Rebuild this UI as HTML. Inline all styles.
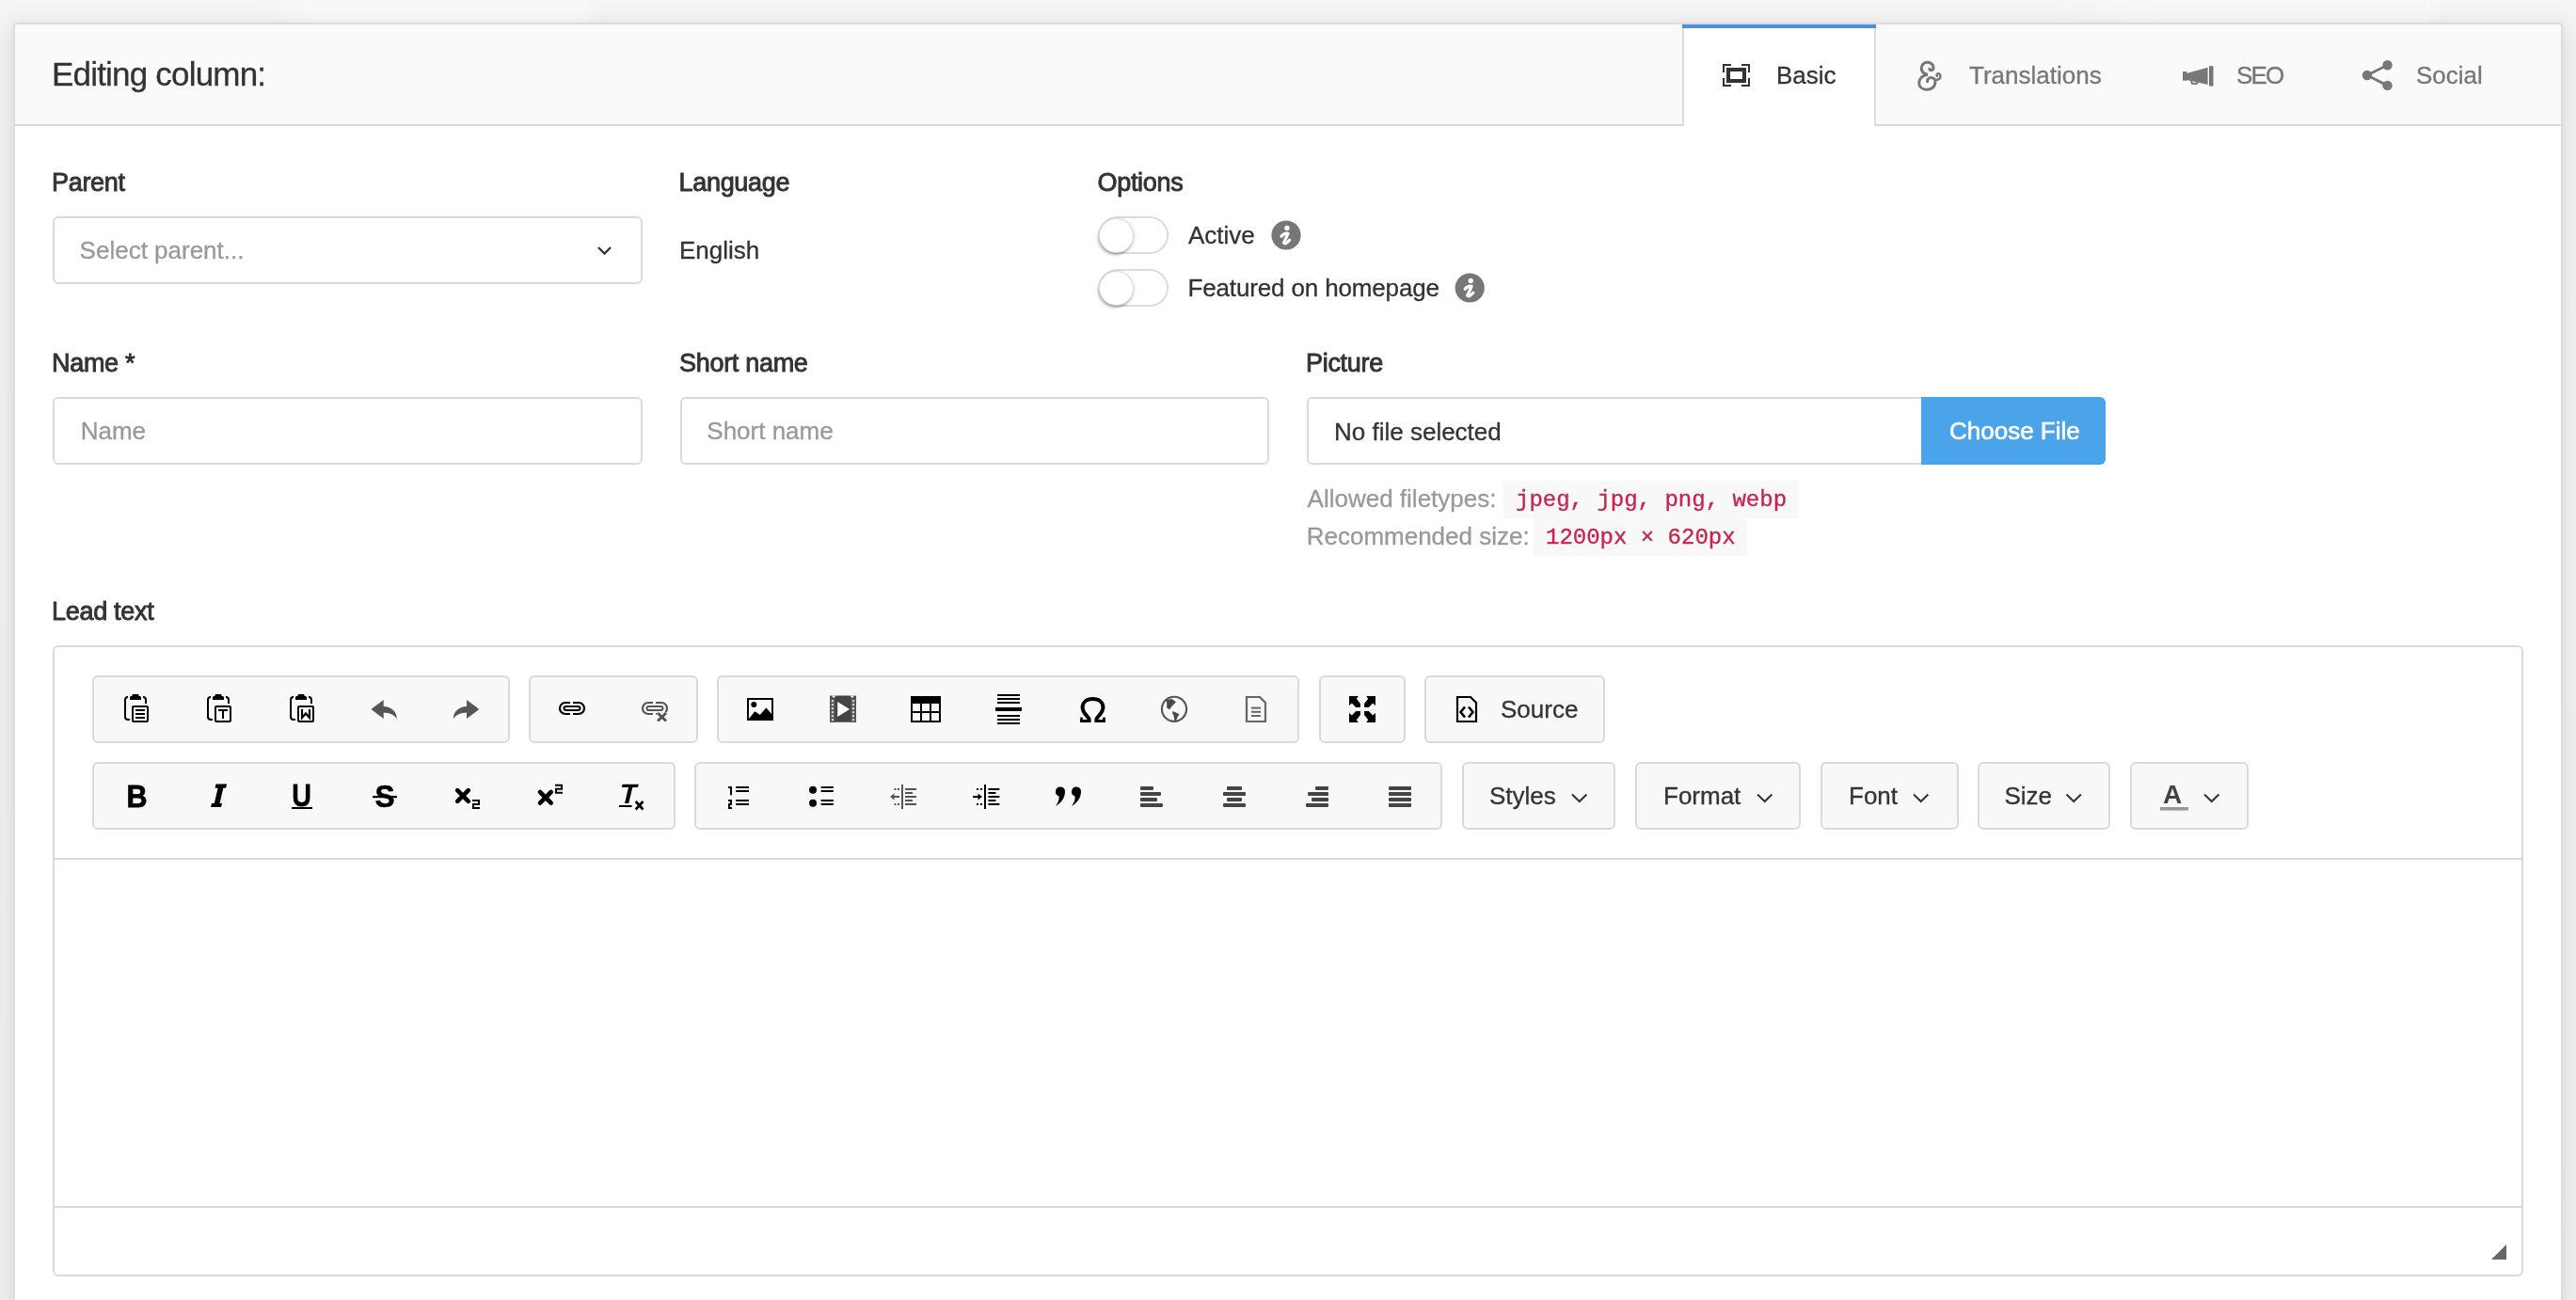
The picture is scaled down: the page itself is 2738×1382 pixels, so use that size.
<!DOCTYPE html>
<html><head><meta charset="utf-8">
<style>
html,body{margin:0;padding:0;width:2738px;height:1382px;overflow:hidden;background:linear-gradient(180deg,#f5f5f5 0px,#eeeeee 50px,#ececec 1382px);font-family:"Liberation Sans",sans-serif;}
.abs{position:absolute;}
.t{position:absolute;white-space:pre;line-height:1;font-size:26px;color:#333;-webkit-text-stroke-width:0.3px;}
.lbl{font-weight:400;letter-spacing:-0.3px;color:#333;-webkit-text-stroke:0.9px #333;font-size:27px !important;}
.ph{color:#999;}
.box{position:absolute;box-sizing:border-box;border:2px solid #dadada;border-radius:6px;background:#fff;}
.grp{position:absolute;box-sizing:border-box;border:2px solid #dadada;border-radius:6px;background:#f8f8f8;}
.mono{font-family:"Liberation Mono",monospace;font-size:24px;color:#c7254e;-webkit-text-stroke:0.35px #c7254e;}
.code{position:absolute;background:#f8f8f8;}
</style></head>
<body><div style="position:absolute;left:0;top:0;width:2738px;height:1382px;will-change:transform;">
<!-- background -->
<div class="abs" style="left:0;top:0;width:2738px;height:24px;background:linear-gradient(90deg,rgba(255,255,255,0) 270px,rgba(255,255,255,0.35) 330px,rgba(255,255,255,0.35) 620px,rgba(255,255,255,0) 640px,rgba(255,255,255,0) 2150px,rgba(255,255,255,0.3) 2300px,rgba(255,255,255,0.3) 2580px,rgba(255,255,255,0) 2600px);"></div>
<!-- card -->
<div class="abs" style="left:14px;top:24px;width:2710px;height:1500px;box-sizing:border-box;border:2px solid #dcdcdc;border-radius:4px;background:#fff;box-shadow:0 1px 14px rgba(0,0,0,0.09);"></div>
<!-- header -->
<div class="abs" style="left:16px;top:26px;width:2706px;height:106px;background:#fafafa;border-radius:2px 2px 0 0;"></div>
<div class="abs" style="left:16px;top:132px;width:2706px;height:2px;background:#d9d9d9;"></div>
<!-- active tab -->
<div class="abs" style="left:1788px;top:26px;width:206px;height:108px;box-sizing:border-box;background:#fff;border-left:2px solid #dcdcdc;border-right:2px solid #dcdcdc;"></div>
<div class="abs" style="left:1788px;top:26px;width:206px;height:4px;background:#4a8fe0;"></div>

<div class="t" style="left:55px;top:61.4px;font-size:35px;letter-spacing:-0.8px;">Editing column:</div>
<div class="t" style="left:1888px;top:67px;">Basic</div>
<div class="t" style="left:2093px;top:67px;color:#777;">Translations</div>
<div class="t" style="left:2377px;top:67px;color:#777;letter-spacing:-1.9px;">SEO</div>
<div class="t" style="left:2568px;top:67px;color:#777;">Social</div>

<!-- row 1 -->
<div class="t lbl" style="left:55px;top:181.1px;">Parent</div>
<div class="box" style="left:56px;top:230px;width:627px;height:72px;"></div>
<div class="t ph" style="left:84.6px;top:253px;">Select parent...</div>

<div class="t lbl" style="left:721.5px;top:181.1px;">Language</div>
<div class="t" style="left:722px;top:253px;">English</div>

<div class="t lbl" style="left:1166.5px;top:181.1px;">Options</div>
<div class="abs" style="left:1168px;top:230px;width:74px;height:40px;box-sizing:border-box;border:2px solid #dcdcdc;border-radius:20px;background:#fff;"></div>
<div class="abs" style="left:1168px;top:232px;width:37px;height:37px;box-sizing:border-box;border:1px solid rgba(0,0,0,0.14);border-radius:50%;background:#fff;box-shadow:-1px 2px 3px rgba(0,0,0,0.3),2px 0 4px rgba(0,0,0,0.06);"></div>
<div class="t" style="left:1263px;top:236.6px;">Active</div>
<div class="abs" style="left:1168px;top:286px;width:74px;height:40px;box-sizing:border-box;border:2px solid #dcdcdc;border-radius:20px;background:#fff;"></div>
<div class="abs" style="left:1168px;top:288px;width:37px;height:37px;box-sizing:border-box;border:1px solid rgba(0,0,0,0.14);border-radius:50%;background:#fff;box-shadow:-1px 2px 3px rgba(0,0,0,0.3),2px 0 4px rgba(0,0,0,0.06);"></div>
<div class="t" style="left:1262.5px;top:292.6px;letter-spacing:-0.15px;">Featured on homepage</div>

<!-- row 2 -->
<div class="t lbl" style="left:55px;top:373.1px;">Name *</div>
<div class="box" style="left:56px;top:422px;width:627px;height:72px;"></div>
<div class="t ph" style="left:85.7px;top:445px;">Name</div>

<div class="t lbl" style="left:722px;top:373.1px;">Short name</div>
<div class="box" style="left:723px;top:422px;width:626px;height:72px;"></div>
<div class="t ph" style="left:751.3px;top:445px;">Short name</div>

<div class="t lbl" style="left:1388px;top:373.1px;">Picture</div>
<div class="box" style="left:1389px;top:422px;width:660px;height:72px;border-radius:6px 0 0 6px;"></div>
<div class="abs" style="left:2042px;top:422px;width:196px;height:72px;background:#4ba3ea;border-radius:0 6px 6px 0;"></div>
<div class="t" style="left:1418px;top:446px;">No file selected</div>
<div class="t" style="left:2072px;top:445px;color:#fff;-webkit-text-stroke-width:0.6px;">Choose File</div>

<div class="t ph" style="left:1389.6px;top:517px;">Allowed filetypes:</div>
<div class="code" style="left:1598px;top:511px;width:314px;height:40px;"></div>
<div class="t mono" style="left:1611px;top:519.5px;">jpeg, jpg, png, webp</div>
<div class="t ph" style="left:1388.7px;top:556.6px;">Recommended size:</div>
<div class="code" style="left:1630px;top:551px;width:227px;height:40px;"></div>
<div class="t mono" style="left:1643px;top:559.6px;">1200px × 620px</div>

<!-- lead text -->
<div class="t lbl" style="left:55px;top:637.1px;">Lead text</div>
<div class="box" style="left:56px;top:686px;width:2626px;height:671px;"></div>
<div class="abs" style="left:58px;top:912px;width:2622px;height:2px;background:#dadada;"></div>
<div class="abs" style="left:58px;top:1282px;width:2622px;height:2px;background:#dadada;"></div>

<!-- toolbar row 1 -->
<div class="grp" style="left:98px;top:718px;width:444px;height:72px;"></div>
<div class="grp" style="left:562px;top:718px;width:180px;height:72px;"></div>
<div class="grp" style="left:762px;top:718px;width:619px;height:72px;"></div>
<div class="grp" style="left:1402px;top:718px;width:92px;height:72px;"></div>
<div class="grp" style="left:1514px;top:718px;width:192px;height:72px;"></div>
<div class="t" style="left:1595px;top:740.7px;">Source</div>
<!-- toolbar row 2 -->
<div class="grp" style="left:98px;top:810px;width:620px;height:72px;"></div>
<div class="grp" style="left:738px;top:810px;width:795px;height:72px;"></div>
<div class="grp" style="left:1554px;top:810px;width:163px;height:72px;"></div>
<div class="grp" style="left:1738px;top:810px;width:176px;height:72px;"></div>
<div class="grp" style="left:1935px;top:810px;width:147px;height:72px;"></div>
<div class="grp" style="left:2102px;top:810px;width:141px;height:72px;"></div>
<div class="grp" style="left:2264px;top:810px;width:126px;height:72px;"></div>
<div class="t" style="left:1583px;top:833px;">Styles</div>
<div class="t" style="left:1768px;top:833px;">Format</div>
<div class="t" style="left:1965px;top:833px;">Font</div>
<div class="t" style="left:2130.4px;top:833px;">Size</div>

<!-- ICONS -->
<svg class="abs" style="left:0;top:0;" width="2738" height="1382" viewBox="0 0 2738 1382">
<!--ICONS_START-->
<g stroke="#333" stroke-width="2" fill="none" stroke-linecap="square"><path d="M1832,76V69H1839M1852,69H1859V76M1832,84V91H1839M1852,91H1859V84"/></g>
<rect x="1837" y="74" width="17" height="12" fill="none" stroke="#333" stroke-width="4"/>
<path d="M2050.8,73.2C2051.5,75.5 2055,75.2 2055,71.8C2055,68.5 2052,66.2 2048.8,66.2C2044.8,66.2 2042.2,69.2 2042.2,72.5C2042.2,76 2045,78.3 2048.8,79.2C2043,80 2039.8,84 2039.8,88.2C2039.8,92.5 2043.5,95.2 2048.5,95.2C2053.5,95.2 2057,91.5 2057,87.3C2057,84.5 2055,82.5 2052.5,82.5C2050,82.5 2048.5,84.5 2048.5,86.8" fill="none" stroke="#777" stroke-width="3" stroke-linecap="round"/>
<path d="M2056.5,84.5C2058.5,85.5 2062.5,84.5 2062.5,81.2C2062.5,79.2 2061,78.2 2060,78.2C2058.8,78.2 2058.2,79.5 2058.8,81" fill="none" stroke="#777" stroke-width="2.4" stroke-linecap="round"/>
<g fill="#777"><rect x="2320" y="76" width="4.5" height="9.7"/><polygon points="2324,78 2346.6,71.7 2346.6,90 2324,85"/><rect x="2348" y="70.2" width="4.5" height="21.4"/></g><path d="M2329.5,85V87.5Q2329.5,89 2331,89H2334Q2335.5,89 2335.5,87.5V86" fill="none" stroke="#777" stroke-width="2"/>
<g fill="#777"><circle cx="2537.6" cy="69.2" r="5.2"/><circle cx="2516" cy="80" r="5.2"/><circle cx="2537.6" cy="90.9" r="5.2"/></g><path d="M2516,80L2537.6,69.2M2516,80L2537.6,90.9" stroke="#777" stroke-width="2.8"/>
<polyline points="636,263 642.5,269.5 649,263" fill="none" stroke="#333" stroke-width="2.3"/>
<circle cx="1367" cy="250" r="15.6" fill="#777"/>
<circle cx="1368.0" cy="242.5" r="2.7" fill="#fff"/>
<path d="M1362.0,251.2Q1365.0,247.4 1369.0,248.2L1364.5,258.2Q1366.0,260.4 1370.6,255.2" fill="none" stroke="#fff" stroke-width="3.2" stroke-linecap="round" stroke-linejoin="round"/>
<circle cx="1562.2" cy="306" r="15.6" fill="#777"/>
<circle cx="1563.2" cy="298.5" r="2.7" fill="#fff"/>
<path d="M1557.2,307.2Q1560.2,303.4 1564.2,304.2L1559.7,314.2Q1561.2,316.4 1565.8,311.2" fill="none" stroke="#fff" stroke-width="3.2" stroke-linecap="round" stroke-linejoin="round"/>
<g transform="translate(0,0)"><path d="M136,741Q133,741 133,744V762Q133,765 136,765H138M152,741Q155,741 155,744V748" fill="none" stroke="#000" stroke-width="2"/><path d="M138,744V741.5Q138,740 139.5,740H140.5V739Q140.5,738 141.5,738H146.5Q147.5,738 147.5,739V740H148.5Q150,740 150,741.5V744Z" fill="#000"/><rect x="141" y="751" width="16" height="16" rx="1" fill="#fff" stroke="#000" stroke-width="2"/><rect x="144" y="754" width="10" height="2"/><rect x="144" y="758" width="10" height="2"/><rect x="144" y="762" width="10" height="2"/></g>
<g transform="translate(88,0)"><path d="M136,741Q133,741 133,744V762Q133,765 136,765H138M152,741Q155,741 155,744V748" fill="none" stroke="#000" stroke-width="2"/><path d="M138,744V741.5Q138,740 139.5,740H140.5V739Q140.5,738 141.5,738H146.5Q147.5,738 147.5,739V740H148.5Q150,740 150,741.5V744Z" fill="#000"/><rect x="141" y="751" width="16" height="16" rx="1" fill="#fff" stroke="#000" stroke-width="2"/><rect x="144" y="754" width="10" height="2"/><rect x="148" y="756" width="2" height="8"/></g>
<g transform="translate(176,0)"><path d="M136,741Q133,741 133,744V762Q133,765 136,765H138M152,741Q155,741 155,744V748" fill="none" stroke="#000" stroke-width="2"/><path d="M138,744V741.5Q138,740 139.5,740H140.5V739Q140.5,738 141.5,738H146.5Q147.5,738 147.5,739V740H148.5Q150,740 150,741.5V744Z" fill="#000"/><rect x="141" y="751" width="16" height="16" rx="1" fill="#fff" stroke="#000" stroke-width="2"/><path d="M145,754V763L149,758.5L153,763V754" fill="none" stroke="#000" stroke-width="2.2"/></g>
<path d="M394.4,754L407.7,744V751C415.5,751 421.8,756.5 421.8,764C418.5,759.5 414,757.7 407.7,757.7V764Z" fill="#555"/>
<path d="M509.3,754L496,744V751C488.2,751 481.9,756.5 481.9,764C485.2,759.5 489.7,757.7 496,757.7V764Z" fill="#555"/>
<g transform="translate(0,0)" fill="none" stroke="#000" stroke-width="2.2"><path d="M606,747H601A6,6 0 0 0 601,759H606M609,747H615A6,6 0 0 1 615,759H609"/><rect x="599.5" y="751" width="17" height="4" rx="2" fill="#fff" stroke-width="2"/></g>
<g transform="translate(88,0)" fill="none" stroke="#555" stroke-width="2.2"><path d="M606,747H601A6,6 0 0 0 601,759H606M609,747H615A6,6 0 0 1 615,759H609"/><rect x="599.5" y="751" width="17" height="4" rx="2" fill="#fff" stroke-width="2"/></g>
<path d="M699,758L708,766.5M708,758L699,766.5" stroke="#fff" stroke-width="6"/>
<path d="M699,758L708,766.5M708,758L699,766.5" stroke="#555" stroke-width="3"/>
<rect x="795" y="743" width="26" height="22" fill="none" stroke="#000" stroke-width="2"/><circle cx="801.3" cy="749" r="3" fill="#000"/><polygon points="796,764 802.3,756.3 807.9,759.9 814.3,752.2 820,759 820,764" fill="#000"/>
<rect x="882" y="739.5" width="28" height="28.3" rx="0.8" fill="#444"/><rect x="882" y="741" width="5.8" height="26.8" fill="#555"/><rect x="904.2" y="741" width="5.8" height="26.8" fill="#555"/><polygon points="883.8,739.5 888.5,739.5 886.2,742" fill="#f8f8f8"/><polygon points="903.5,739.5 908.2,739.5 905.8,742" fill="#f8f8f8"/><rect x="883.8" y="744" width="2.3" height="2.3" fill="#cfcfcf"/><rect x="905.8" y="744" width="2.3" height="2.3" fill="#cfcfcf"/><rect x="883.8" y="748" width="2.3" height="2.3" fill="#cfcfcf"/><rect x="905.8" y="748" width="2.3" height="2.3" fill="#cfcfcf"/><rect x="883.8" y="752" width="2.3" height="2.3" fill="#cfcfcf"/><rect x="905.8" y="752" width="2.3" height="2.3" fill="#cfcfcf"/><rect x="883.8" y="756" width="2.3" height="2.3" fill="#cfcfcf"/><rect x="905.8" y="756" width="2.3" height="2.3" fill="#cfcfcf"/><rect x="883.8" y="760" width="2.3" height="2.3" fill="#cfcfcf"/><rect x="905.8" y="760" width="2.3" height="2.3" fill="#cfcfcf"/><rect x="883.8" y="764" width="2.3" height="2.3" fill="#cfcfcf"/><rect x="905.8" y="764" width="2.3" height="2.3" fill="#cfcfcf"/><polygon points="890.2,746 890.2,762 903,754" fill="#fff"/>
<rect x="968" y="740" width="32" height="8" fill="#000"/><rect x="969" y="741" width="30" height="26" fill="none" stroke="#000" stroke-width="2"/><rect x="978" y="748" width="2" height="18" fill="#000"/><rect x="988" y="748" width="2" height="18" fill="#000"/><rect x="970" y="756" width="28" height="2" fill="#000"/>
<rect x="1060" y="738" width="24" height="2" fill="#000"/><rect x="1060" y="742" width="24" height="2" fill="#000"/><rect x="1060" y="746" width="24" height="2" fill="#000"/><rect x="1060" y="760" width="24" height="2" fill="#000"/><rect x="1060" y="764" width="24" height="2" fill="#000"/><rect x="1060" y="768" width="24" height="2" fill="#000"/><rect x="1058" y="752" width="28" height="4" fill="#000"/>
<path d="M1157.6,765C1157.6,761.5 1150.6,759 1150.6,752C1150.6,746.5 1155,743.1 1161.5,743.1C1168,743.1 1172.4,746.5 1172.4,752C1172.4,759 1165.4,761.5 1165.4,765" fill="none" stroke="#000" stroke-width="4"/><rect x="1148.2" y="765" width="11.4" height="3" fill="#000"/><rect x="1163.4" y="765" width="11.4" height="3" fill="#000"/><rect x="1148.2" y="762.6" width="2.6" height="5.4" fill="#000"/><rect x="1172.2" y="762.6" width="2.6" height="5.4" fill="#000"/>
<circle cx="1248" cy="753.8" r="13.1" fill="none" stroke="#555" stroke-width="2.1"/><polygon points="1239.1,744.3 1245.5,742.9 1249.9,746.2 1245.5,751 1243,754.3 1240.2,752.6 1240.2,747.1" fill="#4a4a4a"/><polygon points="1246.6,756 1251,757.9 1253.5,759.5 1251.6,762.3 1249.9,766.5 1248.3,766.5 1247.7,760.9 1246.1,758.2" fill="#4a4a4a"/>
<path d="M1325,741H1339L1345,747V767H1325Z" fill="none" stroke="#666" stroke-width="2.2"/><rect x="1330" y="751.6" width="10" height="2" fill="#666"/><rect x="1330" y="755.8" width="10" height="2" fill="#666"/><rect x="1330" y="760" width="10" height="2" fill="#666"/>
<polygon points="1434.00,740.00 1443.80,740.00 1441.80,742.80 1445.90,747.90 1445.90,751.90 1441.10,751.90 1436.90,747.60 1434.00,750.10" fill="#000"/>
<polygon points="1462.00,740.00 1452.20,740.00 1454.20,742.80 1450.10,747.90 1450.10,751.90 1454.90,751.90 1459.10,747.60 1462.00,750.10" fill="#000"/>
<polygon points="1434.00,768.00 1443.80,768.00 1441.80,765.20 1445.90,760.10 1445.90,756.10 1441.10,756.10 1436.90,760.40 1434.00,757.90" fill="#000"/>
<polygon points="1462.00,768.00 1452.20,768.00 1454.20,765.20 1450.10,760.10 1450.10,756.10 1454.90,756.10 1459.10,760.40 1462.00,757.90" fill="#000"/>
<path d="M1549,741H1563L1569,747V767H1549Z" fill="none" stroke="#000" stroke-width="2.2"/><path d="M1557,751.5L1552.5,757L1557,762.5M1561,751.5L1565.5,757L1561,762.5" fill="none" stroke="#000" stroke-width="2.6"/>
<text transform="translate(134.5,858) scale(0.9,1)" font-family="Liberation Sans" font-weight="700" font-size="34" fill="#000" stroke="#000" stroke-width="0.8">B</text>
<path d="M229.5,833.6H241.1L240,837.7H237.3L233.6,854H236L235,858.1H224L225,854H227.8L231.6,837.7H228.6Z" fill="#000"/>
<path d="M314,833.6V848Q314,855.2 320.6,855.2Q327.2,855.2 327.2,848V833.6" fill="none" stroke="#000" stroke-width="4.6"/><rect x="310" y="858" width="22" height="2" fill="#000"/>
<text transform="translate(398.5,858) scale(0.93,1)" font-family="Liberation Sans" font-weight="700" font-size="34" fill="#000" stroke="#000" stroke-width="0.6">S</text><rect x="396" y="846" width="26" height="2.2" fill="#000"/>
<path d="M486.2,840.2L497.8,851.8M497.8,840.2L486.2,851.8" stroke="#000" stroke-width="4.6" stroke-linecap="round"/><path d="M502,851H509V855H503V859H510" fill="none" stroke="#000" stroke-width="2"/>
<path d="M574,842L585.7,853.7M585.7,842L574,853.7" stroke="#000" stroke-width="4.6" stroke-linecap="round"/><path d="M590,834.7H597V838.7H591V842.7H598" fill="none" stroke="#000" stroke-width="2"/>
<path d="M661.5,833.7H678.8L678,837H672.3L668.2,854H664L668,837H660.8Z" fill="#000"/><rect x="658" y="856" width="13.6" height="2" fill="#000"/><path d="M675.7,852L683.5,860.5M683.5,852L675.7,860.5" stroke="#000" stroke-width="2.6"/>
<g fill="#000"><rect x="776" y="836" width="2" height="9.3"/><rect x="774" y="836" width="2" height="2"/><path d="M774,850H778V856H776V858H778V860H774V854H776V852H774Z"/><rect x="782.2" y="836" width="13.8" height="2"/><rect x="782.2" y="840" width="13.8" height="2"/><rect x="782.2" y="850" width="13.8" height="2"/><rect x="782.2" y="854" width="13.8" height="2"/></g>
<g fill="#000"><circle cx="864" cy="839.8" r="4"/><circle cx="864" cy="853.8" r="4"/><rect x="872.6" y="836" width="13.2" height="2"/><rect x="872.6" y="840" width="13.2" height="2"/><rect x="872.6" y="850" width="13.2" height="2"/><rect x="872.6" y="854" width="13.2" height="2"/></g>
<g fill="#555"><rect x="958" y="834" width="2" height="26"/><polygon points="946,847 950.5,843.5 950.5,850.5"/><rect x="950" y="846" width="6" height="2"/><rect x="950.5" y="838" width="2" height="2"/><rect x="950.5" y="854" width="2" height="2"/><rect x="954" y="838" width="2" height="2"/><rect x="954" y="854" width="2" height="2"/><rect x="962" y="838" width="12" height="2"/><rect x="962" y="842" width="8" height="2"/><rect x="962" y="846" width="12" height="2"/><rect x="962" y="850" width="8" height="2"/><rect x="962" y="854" width="12" height="2"/></g>
<g fill="#000"><rect x="1046" y="834" width="2" height="26"/><polygon points="1044,847 1039.5,843.5 1039.5,850.5"/><rect x="1034" y="846" width="6" height="2"/><rect x="1038" y="838" width="2" height="2"/><rect x="1038" y="854" width="2" height="2"/><rect x="1042" y="838" width="2" height="2"/><rect x="1042" y="854" width="2" height="2"/><rect x="1050.4" y="838" width="12" height="2"/><rect x="1050.4" y="842" width="8" height="2"/><rect x="1050.4" y="846" width="12" height="2"/><rect x="1050.4" y="850" width="8" height="2"/><rect x="1050.4" y="854" width="12" height="2"/></g>
<path transform="translate(0,0)" d="M1132,841.5C1132,848.5 1127.5,854 1122,857C1124.8,853.5 1126,850 1125.5,846.3A5,5 0 1 1 1132,841.5Z" fill="#000"/>
<path transform="translate(17,0)" d="M1132,841.5C1132,848.5 1127.5,854 1122,857C1124.8,853.5 1126,850 1125.5,846.3A5,5 0 1 1 1132,841.5Z" fill="#000"/>
<rect x="1212" y="836" width="14" height="4" rx="1" fill="#444"/><rect x="1212" y="842" width="22" height="4" rx="1" fill="#444"/><rect x="1212" y="848" width="18" height="4" rx="1" fill="#444"/><rect x="1212" y="854" width="24" height="4" rx="1" fill="#444"/>
<rect x="1304" y="836" width="16" height="4" rx="1" fill="#444"/><rect x="1300" y="842" width="24" height="4" rx="1" fill="#444"/><rect x="1304" y="848" width="16" height="4" rx="1" fill="#444"/><rect x="1300" y="854" width="24" height="4" rx="1" fill="#444"/>
<rect x="1398" y="836" width="14" height="4" rx="1" fill="#444"/><rect x="1390" y="842" width="22" height="4" rx="1" fill="#444"/><rect x="1394" y="848" width="18" height="4" rx="1" fill="#444"/><rect x="1388" y="854" width="24" height="4" rx="1" fill="#444"/>
<rect x="1476" y="836" width="24" height="4" rx="1" fill="#444"/><rect x="1476" y="842" width="24" height="4" rx="1" fill="#444"/><rect x="1476" y="848" width="24" height="4" rx="1" fill="#444"/><rect x="1476" y="854" width="24" height="4" rx="1" fill="#444"/>
<polyline points="1671.0,844.5 1678.7,852 1686.4,844.5" fill="none" stroke="#333" stroke-width="2"/>
<polyline points="1868.0,844.5 1875.7,852 1883.4,844.5" fill="none" stroke="#333" stroke-width="2"/>
<polyline points="2034.0,844.5 2041.7,852 2049.4,844.5" fill="none" stroke="#333" stroke-width="2"/>
<polyline points="2196.5,844.5 2204.2,852 2211.9,844.5" fill="none" stroke="#333" stroke-width="2"/>
<polyline points="2343.0,844.5 2350.7,852 2358.4,844.5" fill="none" stroke="#333" stroke-width="2"/>
<text x="2299" y="854" font-family="Liberation Sans" font-weight="700" font-size="28" fill="#444">A</text><rect x="2296" y="858" width="30" height="3.6" fill="#999"/>
<polygon points="2664,1323 2664,1339 2648,1339" fill="#666"/>
<!--ICONS_END-->
</svg>
</div></body></html>
